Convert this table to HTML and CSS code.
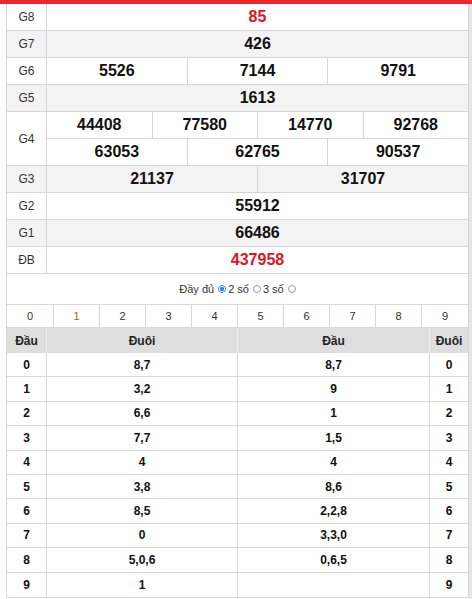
FILE: index.html
```html
<!DOCTYPE html>
<html lang="vi">
<head>
<meta charset="utf-8">
<title>KQXS</title>
<link rel="stylesheet" href="styles.css">
</head>
<body>
<div class="topbar"></div>
<div class="wrap">
  <div class="main">
    <div class="prize">
      <div class="row"><div class="lbl">G8</div><div class="vals"><div class="v red">85</div></div></div>
      <div class="row alt"><div class="lbl">G7</div><div class="vals"><div class="v">426</div></div></div>
      <div class="row"><div class="lbl">G6</div><div class="vals"><div class="v">5526</div><div class="v">7144</div><div class="v">9791</div></div></div>
      <div class="row alt"><div class="lbl">G5</div><div class="vals"><div class="v">1613</div></div></div>
      <div class="row"><div class="lbl">G4</div>
        <div class="stack">
          <div class="vals sub"><div class="v">44408</div><div class="v">77580</div><div class="v">14770</div><div class="v">92768</div></div>
          <div class="vals"><div class="v">63053</div><div class="v">62765</div><div class="v">90537</div></div>
        </div>
      </div>
      <div class="row alt"><div class="lbl">G3</div><div class="vals"><div class="v">21137</div><div class="v">31707</div></div></div>
      <div class="row"><div class="lbl">G2</div><div class="vals"><div class="v">55912</div></div></div>
      <div class="row alt"><div class="lbl">G1</div><div class="vals"><div class="v">66486</div></div></div>
      <div class="row"><div class="lbl">ĐB</div><div class="vals"><div class="v red">437958</div></div></div>
    </div>

    <div class="opts">
      <span>Đầy đủ</span><span class="radio on"></span>
      <span>2 số</span><span class="radio"></span>
      <span>3 số</span><span class="radio"></span>
    </div>

    <div class="digits">
      <div>0</div><div class="hl">1</div><div>2</div><div>3</div><div>4</div><div>5</div><div>6</div><div>7</div><div>8</div><div>9</div>
    </div>

    <div class="lt">
      <div class="hd">Đầu</div><div class="hd">Đuôi</div><div class="hd">Đầu</div><div class="hd">Đuôi</div>
      <div>0</div><div>8,7</div><div>8,7</div><div>0</div>
      <div>1</div><div>3,2</div><div>9</div><div>1</div>
      <div>2</div><div>6,6</div><div>1</div><div>2</div>
      <div>3</div><div>7,7</div><div>1,5</div><div>3</div>
      <div>4</div><div>4</div><div>4</div><div>4</div>
      <div>5</div><div>3,8</div><div>8,6</div><div>5</div>
      <div>6</div><div>8,5</div><div>2,2,8</div><div>6</div>
      <div>7</div><div>0</div><div>3,3,0</div><div>7</div>
      <div>8</div><div>5,0,6</div><div>0,6,5</div><div>8</div>
      <div>9</div><div>1</div><div></div><div>9</div>
    </div>
  </div>
  <div class="strip"></div>
</div>
</body>
</html>
```

FILE: styles.css
```css
* { box-sizing: border-box; }
html, body { margin: 0; padding: 0; background: #fff; }
body {
  font-family: "Liberation Sans", Arial, sans-serif;
  color: #111;
  width: 472px;
  height: 599px;
  overflow: hidden;
}
.topbar { height: 4px; background: #ef262c; }
.wrap { display: flex; height: 595px; }
.main {
  width: 463px;
  margin-left: 6px;
  border-left: 1px solid #d6d6d6;
  border-right: 1px solid #d6d6d6;
  align-self: flex-start;
  border-bottom: 1px solid #d6d6d6;
}
.strip { width: 3px; margin-left: auto; background: #e6e6e6; }

.row { display: flex; border-bottom: 1px solid #d6d6d6; }
.row.alt { background: #f3f3f3; }
.lbl {
  width: 40px;
  flex: none;
  border-right: 1px solid #d6d6d6;
  display: flex;
  align-items: center;
  justify-content: center;
  font-size: 12px;
  color: #333;
}
.stack { flex: 1; display: flex; flex-direction: column; }
.vals { flex: 1; display: flex; height: 26px; }
.stack > .vals { flex: none; }
.vals.sub { height: 27px; border-bottom: 1px solid #d6d6d6; }
.v {
  flex: 1 1 0;
  display: flex;
  align-items: center;
  justify-content: center;
  font-size: 16px;
  font-weight: bold;
  color: #111;
  border-right: 1px solid #d6d6d6;
}
.v:last-child { border-right: none; }
.v.red { color: #e0141e; }

.opts {
  height: 30px;
  display: flex;
  align-items: center;
  justify-content: center;
  font-size: 11px;
  color: #333;
  padding-left: 2px;
}
.opts span { margin-right: 2px; }
.radio {
  display: inline-block;
  width: 8px;
  height: 8px;
  border: 1px solid #9a9a9a;
  border-radius: 50%;
  margin: 0 6px 0 2px;
  background: #fff;
}
.radio.on {
  border-color: #3b8ae6;
  background: radial-gradient(circle, #2f86ea 0 45%, #fff 55%);
}

.digits {
  display: grid;
  grid-template-columns: 47px repeat(9, 46px);
  border-top: 1px solid #d6d6d6;
  border-bottom: 1px solid #d6d6d6;
}
.digits div {
  height: 22px;
  display: flex;
  align-items: center;
  justify-content: center;
  font-size: 11px;
  color: #333;
  border-right: 1px solid #d6d6d6;
}
.digits div:last-child { border-right: none; }
.digits .hl { color: #9a6a12; }

.lt {
  display: grid;
  grid-template-columns: 40px 191px 192px 1fr;
}
.lt div {
  height: 24.4px;
  display: flex;
  align-items: center;
  justify-content: center;
  font-size: 12px;
  font-weight: bold;
  color: #111;
  border-right: 1px solid #d6d6d6;
  border-bottom: 1px solid #d6d6d6;
}
.lt div:nth-child(4n) { border-right: none; }
.lt div:nth-last-child(-n+4) { border-bottom: none; }
.lt .hd {
  height: 25px;
  background: #dedede;
  font-size: 12px;
  color: #222;
  border-right-color: #ececec;
  border-bottom: none;
}
```
